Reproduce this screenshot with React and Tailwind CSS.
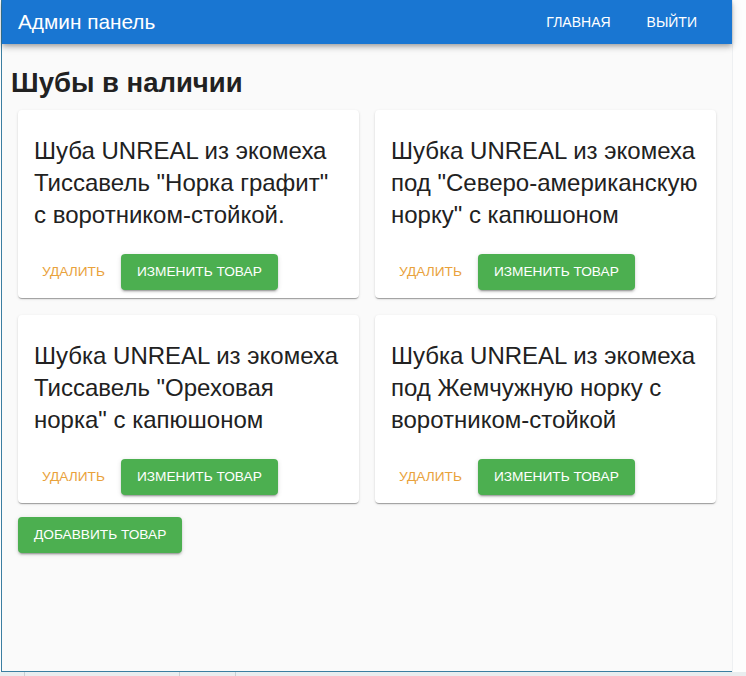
import React from 'react';

const products = [
  'Шуба UNREAL из экомеха Тиссавель "Норка графит" с воротником-стойкой.',
  'Шубка UNREAL из экомеха под "Северо-американскую норку" с капюшоном',
  'Шубка UNREAL из экомеха Тиссавель "Ореховая норка" с капюшоном',
  'Шубка UNREAL из экомеха под Жемчужную норку с воротником-стойкой',
];

const raised =
  'shadow-[0_3px_1px_-2px_rgba(0,0,0,0.2),0_2px_2px_0_rgba(0,0,0,0.14),0_1px_5px_0_rgba(0,0,0,0.12)]';

function ProductCard({ title }) {
  return (
    <div className="bg-white rounded-[4px] shadow-[0_2px_1px_-1px_rgba(0,0,0,0.2),0_1px_1px_0_rgba(0,0,0,0.14),0_1px_3px_0_rgba(0,0,0,0.12)] flex flex-col">
      <div className="pl-4 pr-[17px] pt-[25px]">
        <p className="text-[24px] leading-[32px] text-[#212121]">{title}</p>
      </div>
      <div className="flex items-center gap-2 pt-[23px] pb-2 pl-4">
        <button className="h-9 px-2 text-[13.7px] uppercase text-[#e9a23b] rounded-[4px]">
          Удалить
        </button>
        <button className={`h-9 px-4 text-[13.7px] uppercase text-white bg-[#4caf50] rounded-[4px] ${raised}`}>
          Изменить товар
        </button>
      </div>
    </div>
  );
}

export default function App() {
  return (
    <div className="w-[746px] h-[676px] bg-[#fdfdfd] flex flex-col font-['Liberation_Sans',Arial,sans-serif] overflow-hidden">
      <div className="flex">
        <div className="ml-px w-[731px] h-[672px] border-l border-b border-[#3b7ea1] bg-[#fafafa] flex flex-col">
          <header className="h-[44px] bg-[#1976d2] text-white flex items-center justify-between pl-4 pr-[19px] shadow-[0_2px_4px_-1px_rgba(0,0,0,0.2),0_4px_5px_0_rgba(0,0,0,0.14),0_1px_10px_0_rgba(0,0,0,0.12)] relative z-10">
            <span className="text-[20.8px]">Админ панель</span>
            <nav className="flex items-center gap-1">
              <button className="px-4 h-9 text-[14px] uppercase">Главная</button>
              <button className="px-4 h-9 text-[14px] uppercase">Выйти</button>
            </nav>
          </header>
          <main className="flex flex-col">
            <h1 className="pl-[9px] pt-[24px] pb-[12px] text-[27.5px] leading-[30px] font-bold text-[#212121]">
              Шубы в наличии
            </h1>
            <div className="grid grid-cols-2 gap-x-4 gap-y-[17px] px-4">
              {products.map((p) => (
                <ProductCard key={p} title={p} />
              ))}
            </div>
            <div className="px-4 pt-[14px]">
              <button className={`h-9 px-4 text-[13.7px] uppercase text-white bg-[#4caf50] rounded-[4px] ${raised}`}>
                Добаввить товар
              </button>
            </div>
          </main>
        </div>
        <div className="flex-1 border-l border-[#eef0f2]" />
      </div>
      <div className="flex-1 bg-[#e9edef] flex">
        <div className="w-[25px] border-r border-[#c9cfd3]" />
        <div className="w-[155px] border-r border-[#c9cfd3]" />
        <div className="w-[56px] border-r border-[#c9cfd3]" />
      </div>
    </div>
  );
}
